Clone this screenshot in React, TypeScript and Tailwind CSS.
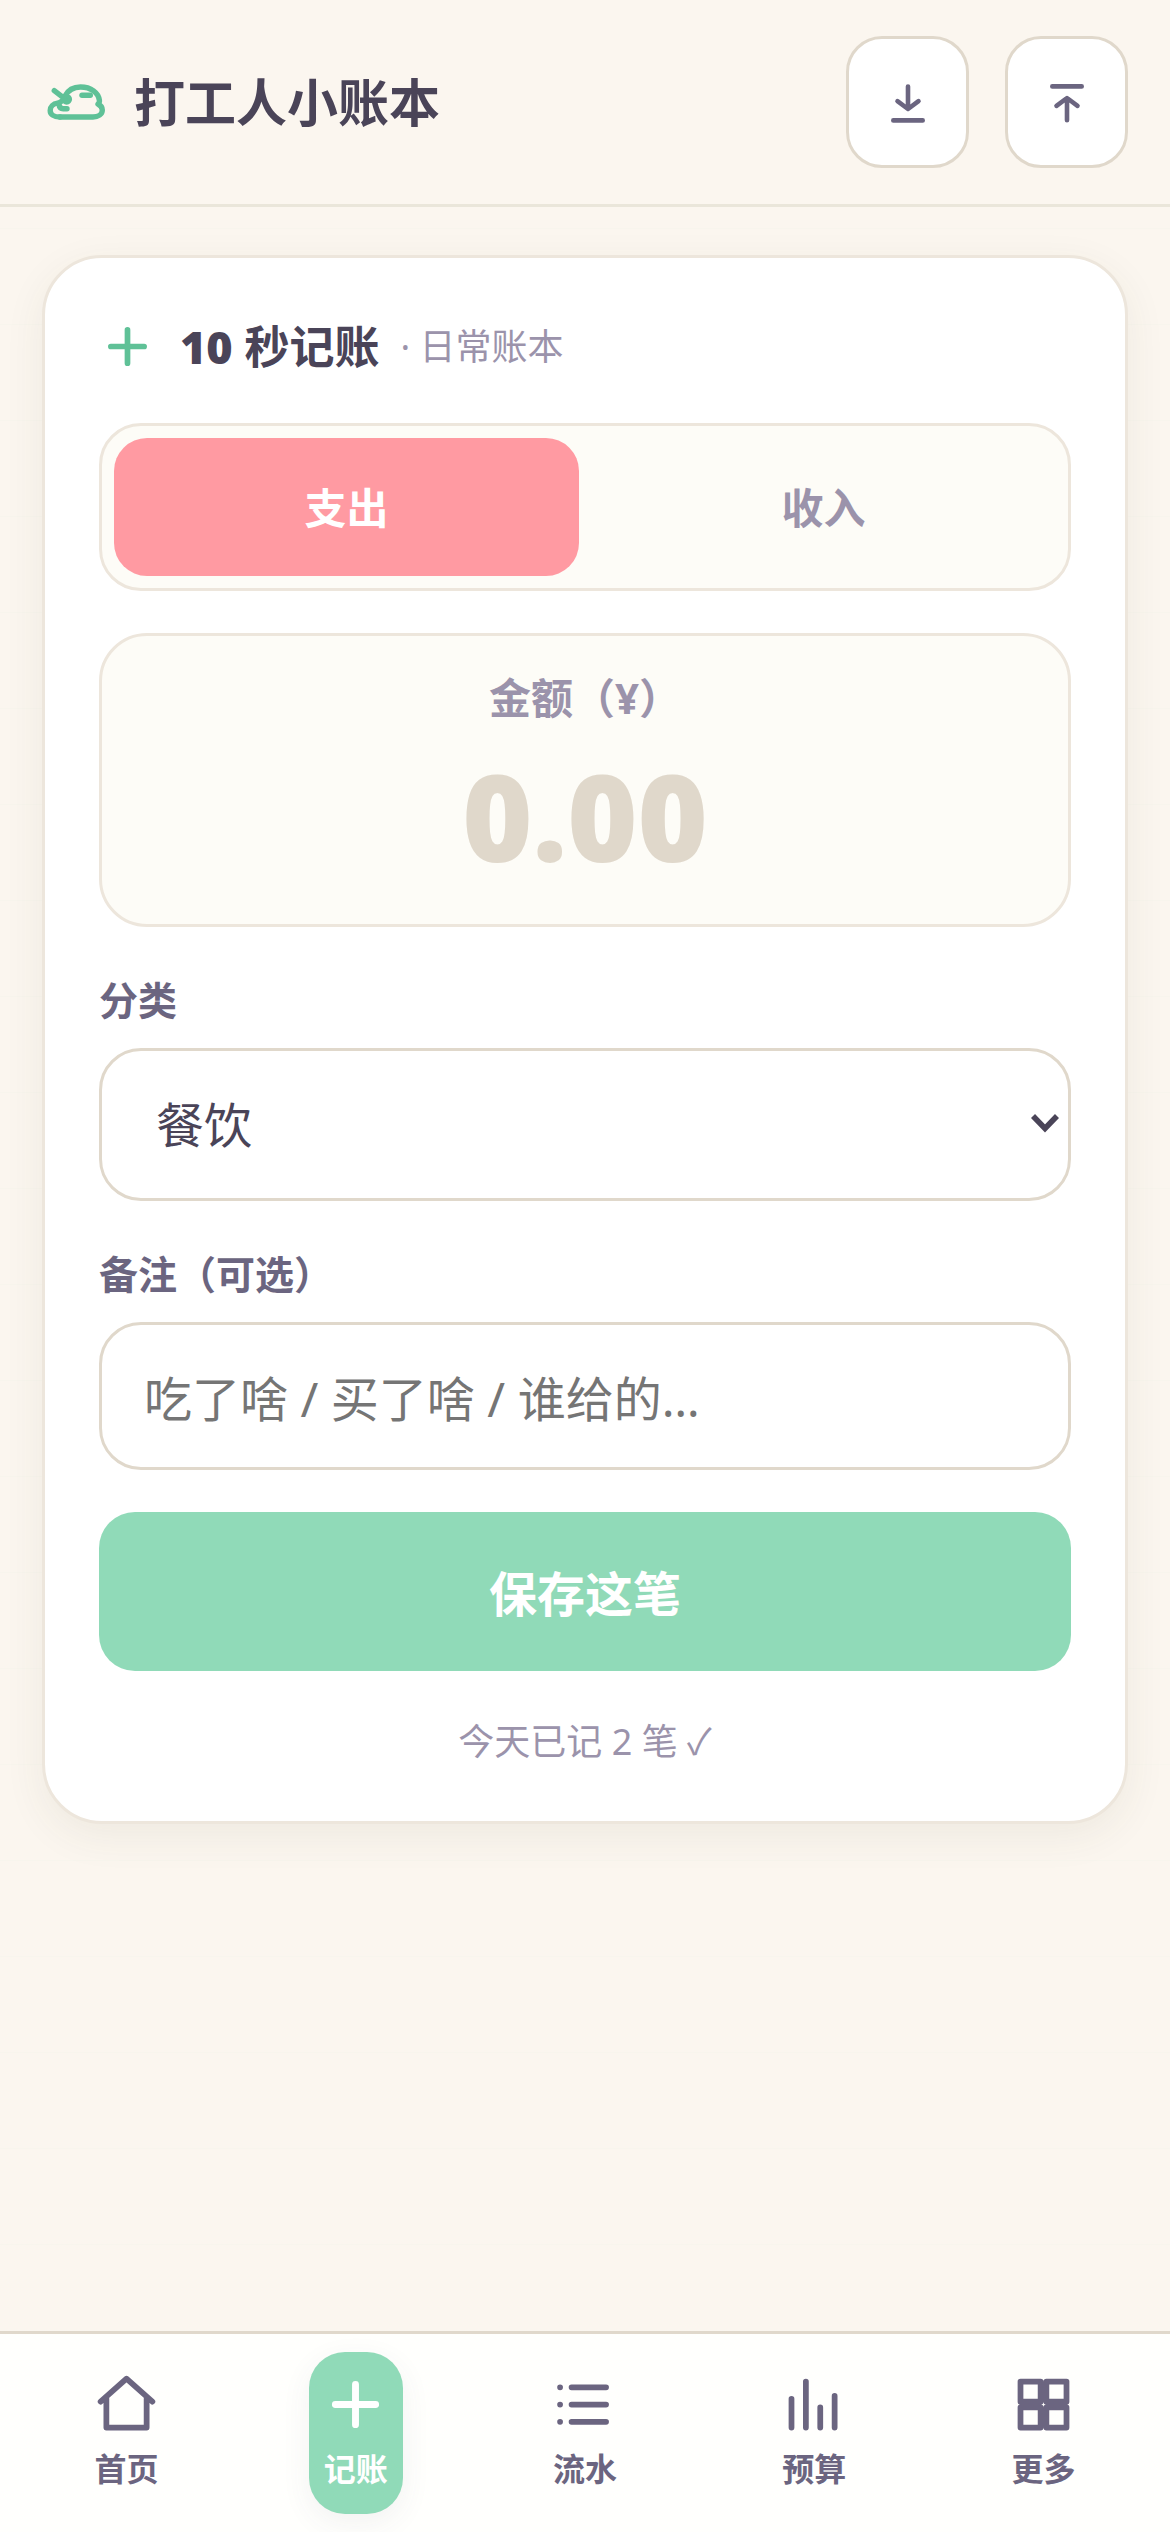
import { useState } from "react";
import type { ReactNode } from "react";

const CATEGORIES = ["餐饮", "交通", "购物", "住房", "娱乐", "其他"];

const NAV_ITEMS: { key: string; label: string; icon: ReactNode }[] = [
  { key: "home", label: "首页", icon: <path d="M3 11l9-8 9 8M5 10v10h14V10" /> },
  { key: "add", label: "记账", icon: <path strokeWidth={2.4} d="M12 5v14M5 12h14" /> },
  {
    key: "list",
    label: "流水",
    icon: <path d="M7.5 6h12M7.5 12h12M7.5 18h12M3.5 6h.01M3.5 12h.01M3.5 18h.01" />,
  },
  { key: "budget", label: "预算", icon: <path d="M4 20V10M9 20V4M14 20v-7M19 20V9" /> },
  {
    key: "more",
    label: "更多",
    icon: <path d="M4 4h7v7H4zM13 4h7v7h-7zM4 13h7v7H4zM13 13h7v7h-7z" />,
  },
];

function Logo() {
  return (
    <svg
      viewBox="0 0 66 66"
      className="size-[66px] text-[#5fc197]"
      fill="none"
      stroke="currentColor"
      strokeWidth={5.4}
      strokeLinecap="round"
      strokeLinejoin="round"
      aria-hidden="true"
    >
      <path d="M18 48h33c5 0 9.300-2.600 9.300-7 0-2.600-1.600-4.600-4.300-6 1.200-1 1.600-2 1.400-3.600C56.600 23.800 49 18 38.500 18c-7 0-12.500 3.400-15.500 9" />
      <path d="M18 48c-6.500 0-9.800-2.700-9.800-6.600 0-3.700 3-6.600 7.300-7.200" />
      <path d="M12.300 21.700l8.700 6.600" />
      <path d="M17 35.500c.3 2.600 1.800 4.200 4.200 4.200H25" />
      <path d="M40 26.300h8.300" />
      <circle cx="24.700" cy="30.300" r="2.700" />
      <path d="M17.500 33.500l5-3" />
    </svg>
  );
}

function IconButton({ label, children }: { label: string; children: ReactNode }) {
  return (
    <button
      type="button"
      aria-label={label}
      className="flex h-[132px] w-[123px] items-center justify-center rounded-[36px] border-3 border-[#e0d8cb] bg-white"
    >
      <svg
        viewBox="0 0 54 54"
        className="size-[54px]"
        fill="none"
        stroke="currentColor"
        strokeWidth={4.6}
        strokeLinecap="round"
        strokeLinejoin="round"
        aria-hidden="true"
      >
        {children}
      </svg>
    </button>
  );
}

export default function App() {
  const [type, setType] = useState("expense");
  const [amount, setAmount] = useState("");
  const [category, setCategory] = useState("餐饮");
  const [note, setNote] = useState("");
  const [tab, setTab] = useState("add");

  const tabClass = (active: boolean) =>
    active ? "bg-[#ff9aa2] text-white" : "bg-transparent text-[#9b93ab]";

  return (
    <div className="flex min-h-screen flex-col bg-[#fbf6ef] bg-[repeating-linear-gradient(to_bottom,transparent_0px,transparent_36px,#f8f5ed_36px,#f8f5ed_37px,transparent_37px,transparent_96px)] font-['Noto_Sans','Noto_Sans_CJK_SC',sans-serif] text-[#4a4458]">
      {/* Header */}
      <header className="flex items-center justify-between border-b-3 border-[#eae6da] bg-[#fbf6ef] px-[42px] py-[36px] text-[#6b6580]">
        <div className="flex items-center gap-[26px]">
          <Logo />
          <h1 className="text-[51px] leading-[66px] font-bold text-[#4a4458]">打工人小账本</h1>
        </div>
        <div className="flex gap-[36px]">
          <IconButton label="导出">
            <path d="M27 11.500v22M16.500 26.200L27 34l10.500-7.800M12.300 45.400h29.400" />
          </IconButton>
          <IconButton label="导入">
            <path d="M27 45.300v-22M16.500 30.800L27 23l10.500 7.800M12.300 11.400h29.400" />
          </IconButton>
        </div>
      </header>

      {/* Entry form */}
      <main className="flex-1 px-[42px] py-[48px]">
        <form
          className="flex flex-col gap-[42px] rounded-[60px] border-3 border-[#ede6dc] bg-white p-[54px] shadow-[0_12px_42px_rgba(74,68,40,0.07)]"
          onSubmit={(e) => e.preventDefault()}
        >
          <div className="flex items-center">
            <svg
              viewBox="0 0 24 24"
              className="mr-[24px] size-[57px] text-[#5fc197]"
              fill="none"
              stroke="currentColor"
              strokeWidth={2.4}
              strokeLinecap="round"
              aria-hidden="true"
            >
              <path d="M12 5v14M5 12h14" />
            </svg>
            <h2 className="text-[45px] leading-[69px] font-bold">
              <span className="font-black">10</span> 秒记账
            </h2>
            <span className="ml-[21px] text-[36px] leading-[69px] text-[#9b93ab]">· 日常账本</span>
          </div>

          <div className="grid grid-cols-2 gap-[12px] rounded-[42px] border-3 border-[#ede6dc] bg-[#fdfcf7] p-[12px] text-[42px] font-bold">
            <button
              type="button"
              aria-pressed={type === "expense"}
              onClick={() => setType("expense")}
              className={`h-[138px] rounded-[33px] ${tabClass(type === "expense")}`}
            >
              支出
            </button>
            <button
              type="button"
              aria-pressed={type === "income"}
              onClick={() => setType("income")}
              className={`h-[138px] rounded-[33px] ${tabClass(type === "income")}`}
            >
              收入
            </button>
          </div>

          <div className="flex flex-col rounded-[48px] border-3 border-[#ede6dc] bg-[#fdfcf7] px-[42px] pt-[30px] pb-[21px] text-center">
            <label htmlFor="amount" className="text-[42px] leading-[63px] font-bold text-[#9b93ab]">
              金额（¥）
            </label>
            <input
              id="amount"
              inputMode="decimal"
              placeholder="0.00"
              value={amount}
              onChange={(e) => setAmount(e.target.value)}
              className="h-[174px] w-full bg-transparent text-center text-[120px] font-black outline-none placeholder:text-[#e0d8cb]"
            />
          </div>

          <div>
            <label
              htmlFor="category"
              className="mb-[18px] block text-[39px] leading-[61px] font-bold text-[#6b6580]"
            >
              分类
            </label>
            <div className="relative">
              <select
                id="category"
                value={category}
                onChange={(e) => setCategory(e.target.value)}
                className="block h-[153px] w-full appearance-none rounded-[42px] border-3 border-[#e0d8cb] bg-white px-[54px] text-[48px]"
              >
                {CATEGORIES.map((c) => (
                  <option key={c}>{c}</option>
                ))}
              </select>
              <svg
                viewBox="0 0 28 20"
                className="pointer-events-none absolute top-[65px] right-[12px] h-[20px] w-[28px]"
                fill="none"
                stroke="currentColor"
                strokeWidth={5.6}
                aria-hidden="true"
              >
                <path d="M2 3l12 12.500L26 3" />
              </svg>
            </div>
          </div>

          <div>
            <label
              htmlFor="note"
              className="mb-[18px] block text-[39px] leading-[61px] font-bold text-[#6b6580]"
            >
              备注（可选）
            </label>
            <input
              id="note"
              value={note}
              onChange={(e) => setNote(e.target.value)}
              placeholder="吃了啥 / 买了啥 / 谁给的…"
              className="block h-[148px] w-full rounded-[42px] border-3 border-[#e0d8cb] bg-white px-[42px] pt-1 text-[48px] placeholder:text-[#757575]"
            />
          </div>

          <button
            type="submit"
            className="h-[159px] rounded-[36px] bg-[#90dab8] pt-1 text-[48px] font-bold text-white"
          >
            保存这笔
          </button>

          <p className="pt-1 text-center text-[36px] leading-[50px] text-[#9b93ab]">今天已记 2 笔 ✓</p>
        </form>
      </main>

      {/* Bottom navigation */}
      <nav className="sticky bottom-0 grid grid-cols-5 border-t-3 border-[#e0d8cb] bg-[#fffffd] px-[12px] py-[18px]">
        {NAV_ITEMS.map((item) => (
          <button
            key={item.key}
            type="button"
            onClick={() => setTab(item.key)}
            className={`flex flex-col items-center gap-1 justify-self-center rounded-[36px] px-[15px] pt-[18px] pb-[20px] ${
              tab === item.key
                ? "bg-[#90dab8] text-white shadow-[0_9px_30px_rgba(74,68,88,0.07)]"
                : "text-[#6b6580]"
            }`}
          >
            <svg
              viewBox="0 0 24 24"
              className="h-[69px] w-[63px] overflow-visible"
              fill="none"
              stroke="currentColor"
              strokeWidth={2}
              strokeLinecap="round"
              strokeLinejoin="round"
              preserveAspectRatio="xMidYMid slice"
              aria-hidden="true"
            >
              {item.icon}
            </svg>
            <span className="text-[32px] leading-[51px] font-bold">{item.label}</span>
          </button>
        ))}
      </nav>
    </div>
  );
}
